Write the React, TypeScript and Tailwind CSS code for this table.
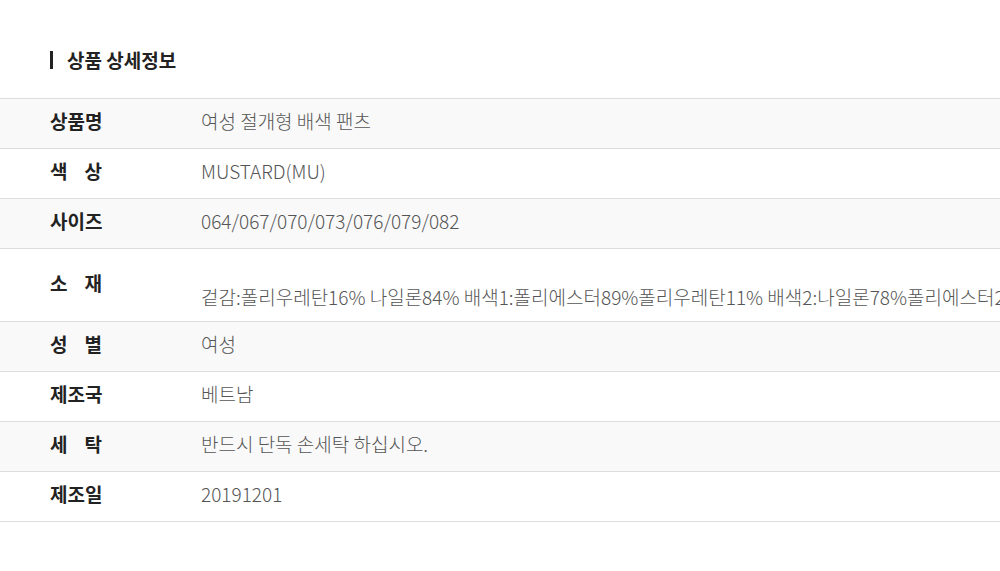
const rows: { label: string; value: string; spaced?: boolean; tall?: boolean }[] = [
  { label: "상품명", value: "여성 절개형 배색 팬츠" },
  { label: "색상", value: "MUSTARD(MU)", spaced: true },
  { label: "사이즈", value: "064/067/070/073/076/079/082" },
  {
    label: "소재",
    value:
      "겉감:폴리우레탄16% 나일론84% 배색1:폴리에스터89%폴리우레탄11% 배색2:나일론78%폴리에스터22%",
    spaced: true,
    tall: true,
  },
  { label: "성별", value: "여성", spaced: true },
  { label: "제조국", value: "베트남" },
  { label: "세탁", value: "반드시 단독 손세탁 하십시오.", spaced: true },
  { label: "제조일", value: "20191201" },
];

function Label({ text, spaced }: { text: string; spaced?: boolean }) {
  if (!spaced) return <span>{text}</span>;
  return (
    <span className="flex w-[52px] justify-between">
      {text.split("").map((c, i) => (
        <span key={i}>{c}</span>
      ))}
    </span>
  );
}

export default function App() {
  return (
    <div
      className="min-h-[571px] w-[1000px] overflow-hidden bg-white"
      style={{ fontFamily: '"Noto Sans CJK KR", "Noto Sans", sans-serif' }}
    >
      {/* title */}
      <div className="flex h-[98px] items-center pl-[50px] pt-[22px]">
        <span className="mr-[14px] h-[18px] w-[3px] bg-[#222]" />
        <h2 className="text-[19px] font-bold text-[#222]">상품 상세정보</h2>
      </div>

      {/* detail table */}
      <div className="border-t border-[#ddd]">
        {rows.map((r, i) => (
          <div
            key={r.label}
            className={`flex border-b border-[#ddd] ${i % 2 === 0 ? "bg-[#f9f9f9]" : "bg-white"} ${
              r.tall ? "h-[73px]" : "h-[50px]"
            }`}
          >
            <div className="flex w-[201px] shrink-0 items-center pb-[4px] pl-[50px] text-[19px] font-bold text-[#222]">
              <Label text={r.label} spaced={r.spaced} />
            </div>
            <div
              className={`flex whitespace-nowrap text-[19px] font-light text-[#555] ${
                r.tall ? "items-start pt-[34px]" : "items-center pb-[4px]"
              }`}
            >
              {r.value}
            </div>
          </div>
        ))}
      </div>
    </div>
  );
}
